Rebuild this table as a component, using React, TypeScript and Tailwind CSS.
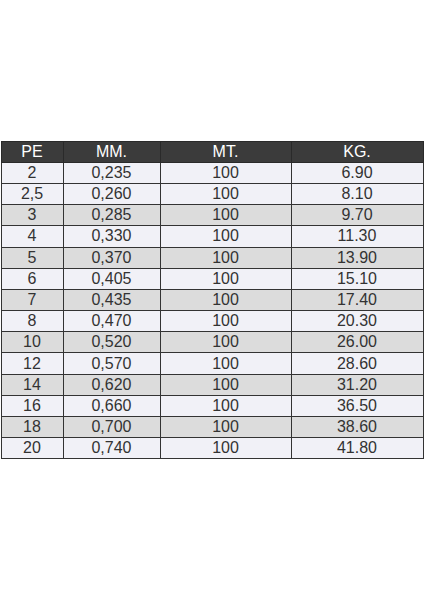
const rows: [string, string, string, string][] = [
  ["2", "0,235", "100", "6.90"],
  ["2,5", "0,260", "100", "8.10"],
  ["3", "0,285", "100", "9.70"],
  ["4", "0,330", "100", "11.30"],
  ["5", "0,370", "100", "13.90"],
  ["6", "0,405", "100", "15.10"],
  ["7", "0,435", "100", "17.40"],
  ["8", "0,470", "100", "20.30"],
  ["10", "0,520", "100", "26.00"],
  ["12", "0,570", "100", "28.60"],
  ["14", "0,620", "100", "31.20"],
  ["16", "0,660", "100", "36.50"],
  ["18", "0,700", "100", "38.60"],
  ["20", "0,740", "100", "41.80"],
]

// gray rows in the reference
const grayRows = ["3", "5", "7", "10", "14", "18"]

export default function App() {
  return (
    <div className="flex h-[600px] w-[424px] items-center justify-center bg-white font-['Liberation_Sans',Arial,sans-serif]">
      <table className="w-[422px] table-fixed border-collapse text-[16px] leading-none">
        <colgroup>
          <col className="w-[62px]" />
          <col className="w-[97px]" />
          <col className="w-[131px]" />
          <col className="w-[132px]" />
        </colgroup>
        <thead>
          <tr className="h-[21.2px] bg-[#3b3b3b] text-white">
            <th className="border border-[#2a2a2a] font-normal">PE</th>
            <th className="border border-[#2a2a2a] font-normal">MM.</th>
            <th className="border border-[#2a2a2a] font-normal">MT.</th>
            <th className="border border-[#2a2a2a] font-normal">KG.</th>
          </tr>
        </thead>
        <tbody className="text-[#333333]">
          {rows.map((r) => (
            <tr
              key={r[0]}
              className={grayRows.includes(r[0]) ? "h-[21.2px] bg-[#dcdcdc]" : "h-[21.2px] bg-[#f1f1f7]"}
            >
              {r.map((c, i) => (
                <td key={i} className="border border-[#333333] p-0 text-center">
                  {c}
                </td>
              ))}
            </tr>
          ))}
        </tbody>
      </table>
    </div>
  )
}
